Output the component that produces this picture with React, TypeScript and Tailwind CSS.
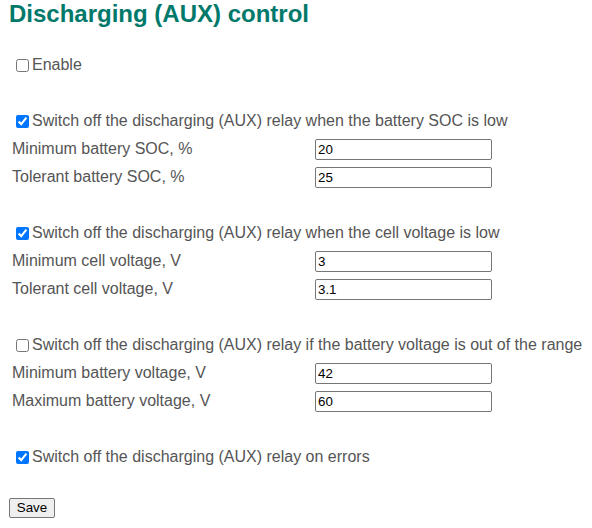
import React from 'react';

type Field = { label: string; value: string };
type Section = { title: string; checked: boolean; fields: Field[] };

const sections: Section[] = [
  {
    title: 'Switch off the discharging (AUX) relay when the battery SOC is low',
    checked: true,
    fields: [
      { label: 'Minimum battery SOC, %', value: '20' },
      { label: 'Tolerant battery SOC, %', value: '25' },
    ],
  },
  {
    title: 'Switch off the discharging (AUX) relay when the cell voltage is low',
    checked: true,
    fields: [
      { label: 'Minimum cell voltage, V', value: '3' },
      { label: 'Tolerant cell voltage, V', value: '3.1' },
    ],
  },
  {
    title: 'Switch off the discharging (AUX) relay if the battery voltage is out of the range',
    checked: false,
    fields: [
      { label: 'Minimum battery voltage, V', value: '42' },
      { label: 'Maximum battery voltage, V', value: '60' },
    ],
  },
  {
    title: 'Switch off the discharging (AUX) relay on errors',
    checked: true,
    fields: [],
  },
];

function CheckRow({ label, checked }: { label: string; checked: boolean }) {
  return (
    <label className="h-[28px] flex items-center pl-[16px] text-[16px] leading-[20px] text-[#555]">
      <input type="checkbox" defaultChecked={checked} className="w-[13px] h-[13px] mr-[3px] accent-[#0075ff]" />
      {label}
    </label>
  );
}

export default function App() {
  return (
    <div className="w-[592px] h-[528px] bg-white font-['Liberation_Sans',Arial,sans-serif]">
      <h1 className="h-[51px] pl-[9px] text-[24px] leading-[28px] font-bold text-[#00796b]">
        Discharging (AUX) control
      </h1>

      <CheckRow label="Enable" checked={false} />

      {sections.map((s) => (
        <div key={s.title} className="mt-[28px]">
          <CheckRow label={s.title} checked={s.checked} />
          {s.fields.map((f) => (
            <div key={f.label} className="h-[28px] flex items-center pl-[12px] text-[16px] leading-[20px] text-[#555]">
              <span className="w-[303px]">{f.label}</span>
              <input
                type="text"
                defaultValue={f.value}
                className="w-[177px] h-[21px] border border-[#767676] rounded-[2px] px-[2px] text-[13.33px] text-black bg-white"
              />
            </div>
          ))}
        </div>
      ))}

      <div className="h-[23px]" />
      <div className="h-[28px] flex items-center pl-[9px]">
        <button className="w-[46px] h-[20px] border border-[#767676] rounded-[2px] bg-[#efefef] text-[13.33px] leading-[16px] text-black">
          Save
        </button>
      </div>
    </div>
  );
}
